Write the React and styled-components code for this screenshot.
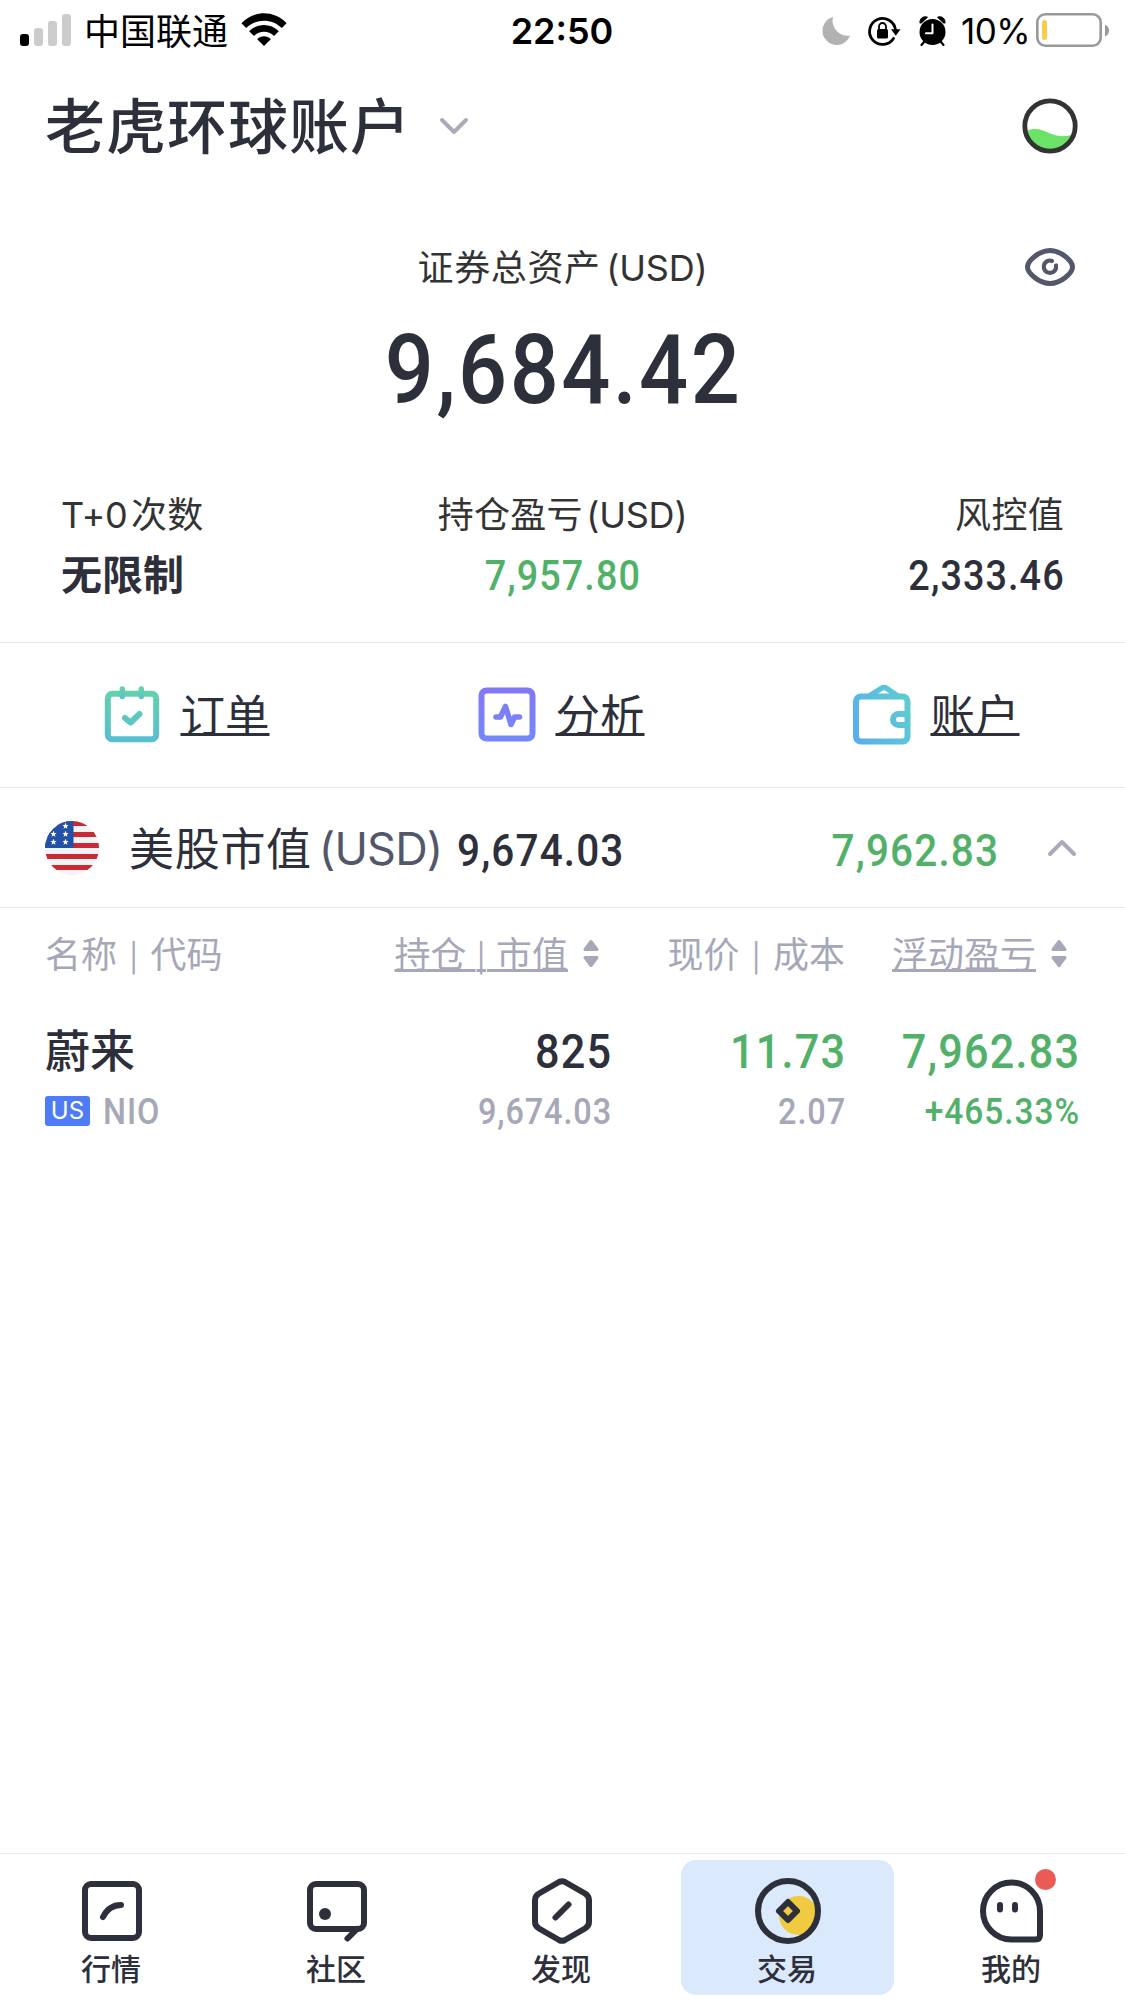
import styled, { createGlobalStyle } from "styled-components"

const positions = [
  {
    name: "蔚来",
    market: "US",
    code: "NIO",
    amount: "825",
    value: "9,674.03",
    price: "11.73",
    cost: "2.07",
    profit: "7,962.83",
    percent: "+465.33%",
  },
]

const tabs = [
  { label: "行情", icon: <QuotesIcon /> },
  { label: "社区", icon: <CommunityIcon /> },
  { label: "发现", icon: <DiscoverIcon /> },
  { label: "交易", icon: <TradeIcon />, active: true },
  { label: "我的", icon: <MineIcon />, unread: true },
]

export default function App() {
  return (
    <Page>
      <GlobalStyle />

      <StatusBar>
        <StatusSide>
          <SignalIcon />
          <Carrier>中国联通</Carrier>
          <WifiIcon />
        </StatusSide>
        <Clock>22:50</Clock>
        <StatusSide $end>
          <MoonIcon />
          <LockIcon />
          <AlarmIcon />
          <Percent>10%</Percent>
          <BatteryIcon />
        </StatusSide>
      </StatusBar>

      <AccountBar>
        <h1>老虎环球账户</h1>
        <Chevron />
        <LevelIcon />
      </AccountBar>

      <Summary>
        <AssetsLabel>
          <span>证券总资产 <Latin>(USD)</Latin></span>
          <EyeIcon />
        </AssetsLabel>
        <Total>
          <Num $size={96}>9,684.42</Num>
        </Total>
        <Stats>
          <Stat>
            <Label><Latin>T+0</Latin> 次数</Label>
            <StatValue>无限制</StatValue>
          </Stat>
          <Stat $align="center">
            <Label>持仓盈亏 <Latin>(USD)</Latin></Label>
            <StatValue><Num $size={42} $color={green}>7,957.80</Num></StatValue>
          </Stat>
          <Stat $align="right">
            <Label>风控值</Label>
            <StatValue><Num $size={42} $origin="right">2,333.46</Num></StatValue>
          </Stat>
        </Stats>
      </Summary>

      <Actions>
        <Action>
          <OrderIcon />
          <span>订单</span>
        </Action>
        <Action>
          <AnalysisIcon />
          <span>分析</span>
        </Action>
        <Action>
          <WalletIcon />
          <span>账户</span>
        </Action>
      </Actions>

      <MarketRow>
        <FlagIcon />
        <MarketName>美股市值</MarketName>
        <Currency>(USD)</Currency>
        <MarketValue>
          <Num $size={45} $origin="left">9,674.03</Num>
        </MarketValue>
        <MarketProfit>
          <Num $size={45} $color={green} $origin="right">7,962.83</Num>
        </MarketProfit>
        <Chevron $up />
      </MarketRow>

      <TableHead>
        <HeadCell>名称 <Pipe>|</Pipe> 代码</HeadCell>
        <HeadSort>
          <u>持仓 <Pipe>|</Pipe> 市值</u>
          <SortIcon />
        </HeadSort>
        <HeadCell $align="right">现价 <Pipe>|</Pipe> 成本</HeadCell>
        <HeadSort>
          <u>浮动盈亏</u>
          <SortIcon />
        </HeadSort>
      </TableHead>

      {positions.map((p) => (
        <Position key={p.code}>
          <Name>{p.name}</Name>
          <Num $size={48} $origin="right">{p.amount}</Num>
          <Num $size={48} $color={green} $origin="right">{p.price}</Num>
          <Num $size={48} $color={green} $origin="right">{p.profit}</Num>
          <Code>
            <Market>{p.market}</Market>
            <Num $size={36} $color={grey} $origin="left">{p.code}</Num>
          </Code>
          <Num $size={36} $color={grey} $origin="right">{p.value}</Num>
          <Num $size={36} $color={grey} $origin="right">{p.cost}</Num>
          <Num $size={36} $color={green} $origin="right" $scale={0.93}>{p.percent}</Num>
        </Position>
      ))}

      <TabBar>
        {tabs.map((tab) => (
          <Tab key={tab.label} $active={tab.active}>
            {tab.icon}
            <span>{tab.label}</span>
            {tab.unread && <Dot />}
          </Tab>
        ))}
      </TabBar>
    </Page>
  )
}

function SignalIcon() {
  return (
    <svg width="52" height="34" viewBox="0 0 52 34">
      <rect x="0" y="20" width="9" height="12" rx="3" fill="#000" />
      <rect x="14" y="14" width="9" height="18" rx="3" fill="#ccc" />
      <rect x="28" y="7" width="9" height="25" rx="3" fill="#ccc" />
      <rect x="42" y="0" width="9" height="32" rx="3" fill="#ccc" />
    </svg>
  )
}

function WifiIcon() {
  return (
    <svg width="46" height="34" viewBox="0 0 46 34">
      <path d="M0.4 9.2C13 -4 33 -4 45.6 9.2L40.8 14C31 4.2 15 4.2 5.2 14Z" />
      <path d="M8.2 17.2C16.5 8.8 29.5 8.8 37.8 17.2L33 22C27.3 16.4 18.7 16.4 13 22Z" />
      <path d="M16.2 25.2C20 21.4 26 21.4 29.8 25.2L23 32Z" />
    </svg>
  )
}

function MoonIcon() {
  return (
    <svg width="28" height="30" viewBox="0 0 28 30">
      <path d="M11 1A15 15 0 0 0 28 19.5A14.2 14.2 0 1 1 11 1Z" fill="#b2b2b2" />
    </svg>
  )
}

function LockIcon() {
  return (
    <svg width="33" height="30" viewBox="0 0 33 30">
      <path d="M25.5 22.5A13 13 0 1 1 27.5 14" fill="none" stroke="#000" strokeWidth="2.8" strokeLinecap="round" />
      <path d="M23 13.2H32.5L27.8 19.8Z" />
      <rect x="9" y="13" width="11" height="9.5" rx="1.5" />
      <path d="M11 13.5V10.5A3.5 3.5 0 0 1 18 10.5V13.5" fill="none" stroke="#000" strokeWidth="1.8" />
    </svg>
  )
}

function AlarmIcon() {
  return (
    <svg width="28" height="30" viewBox="0 0 28 30">
      <circle cx="13.5" cy="16" r="13" />
      <path d="M0.9 7.2C0 3 4.5 -1 8.7 1.2L2.6 7ZM26.1 7.2C27 3 22.5 -1 18.3 1.2L24.4 7Z" stroke="#000" strokeWidth="0.6" />
      <path d="M5 26L2.5 29M22 26L24.5 29" stroke="#000" strokeWidth="2.2" strokeLinecap="round" />
      <path d="M13.5 8.5V17.3H7" fill="none" stroke="#fff" strokeWidth="2" strokeLinecap="round" strokeLinejoin="round" />
    </svg>
  )
}

function BatteryIcon() {
  return (
    <svg width="74" height="34" viewBox="0 0 74 34">
      <rect x="1.3" y="0.3" width="63.4" height="31.4" rx="8" fill="none" stroke="#999" strokeWidth="2.6" />
      <rect x="6" y="6" width="5" height="20" rx="2.5" fill="#f7ce46" />
      <path d="M69 10.5Q73 12.5 73 16.5T69 22.5Z" fill="#999" />
    </svg>
  )
}

function LevelIcon() {
  return (
    <svg width="56" height="56" viewBox="0 0 56 56">
      <path d="M4 33C14 29 20 32 27 35S42 40 52 36A25 25 0 0 1 4 33Z" fill="#6ae368" />
      <circle cx="28" cy="28" r="25.2" fill="none" stroke="#333" strokeWidth="4.8" />
    </svg>
  )
}

function EyeIcon() {
  return (
    <svg width="50" height="40" viewBox="0 0 50 40" fill="none" stroke="#53576a" strokeWidth="5" strokeLinecap="round">
      <path d="M2.5 20C2.5 14 14 3.5 25 3.5S47.5 14 47.5 20S36 36.5 25 36.5S2.5 26 2.5 20Z" />
      <path d="M27 13.9A6.2 6.2 0 1 0 31 18.5" strokeWidth="4.2" />
    </svg>
  )
}

function OrderIcon() {
  return (
    <svg width="60" height="60" viewBox="0 0 60 60" fill="none" strokeLinecap="round" strokeLinejoin="round">
      <defs>
        <linearGradient id="order" gradientUnits="userSpaceOnUse" x1="0" y1="0" x2="0" y2="57">
          <stop offset="0" stopColor="#62d5a8" />
          <stop offset="1" stopColor="#58bdd0" />
        </linearGradient>
        <linearGradient id="ring" gradientUnits="userSpaceOnUse" x1="0" y1="3" x2="0" y2="15">
          <stop offset="0" stopColor="#62d5a8" />
          <stop offset="1" stopColor="#58bdd0" />
        </linearGradient>
      </defs>
      <rect x="2.8" y="8.8" width="48.4" height="45.4" rx="4.5" stroke="url(#order)" strokeWidth="6" />
      <path d="M17.3 4V11.5M36.3 4V11.5" stroke="url(#ring)" strokeWidth="5.4" />
      <path d="M20 33L25.5 37.5L34.5 29" stroke="url(#order)" strokeWidth="6" />
    </svg>
  )
}

function AnalysisIcon() {
  return (
    <svg width="60" height="60" viewBox="0 0 60 60" fill="none" strokeLinecap="round" strokeLinejoin="round">
      <defs>
        <linearGradient id="analysis" gradientUnits="userSpaceOnUse" x1="0" y1="3" x2="0" y2="57">
          <stop offset="0" stopColor="#8377f5" />
          <stop offset="1" stopColor="#7488fb" />
        </linearGradient>
      </defs>
      <g stroke="url(#analysis)">
        <rect x="1.5" y="5.5" width="51" height="48" rx="5" strokeWidth="6" />
        <path d="M16 32H20.5L25.5 21.5L31 39.5L34.5 32H39.500" strokeWidth="5.600" />
      </g>
    </svg>
  )
}

function WalletIcon() {
  return (
    <svg width="60" height="60" viewBox="0 0 60 60" fill="none" strokeLinecap="round" strokeLinejoin="round">
      <defs>
        <linearGradient id="wallet" gradientUnits="userSpaceOnUse" x1="-2" y1="45" x2="55" y2="20">
          <stop offset="0" stopColor="#58aeee" />
          <stop offset="1" stopColor="#5dccd0" />
        </linearGradient>
      </defs>
      <g stroke="url(#wallet)" strokeWidth="6">
        <rect x="1" y="11.5" width="51.5" height="45" rx="5" />
        <path d="M15 10.5L26.5 3.3Q29 1.5 31.5 3.3L42 10.5" strokeWidth="5.4" />
        <path d="M52 29H43.5A5.5 5.5 0 0 0 43.5 40H52" />
      </g>
    </svg>
  )
}

function FlagIcon() {
  return (
    <svg width="54" height="54" viewBox="0 0 54 54">
      <defs>
        <clipPath id="flag"><circle cx="27" cy="27" r="27" /></clipPath>
        <path id="star" d="M0 -3.2L0.9 -1H3.1L1.3 0.5L2 2.8L0 1.4L-2 2.8L-1.3 0.5L-3.1 -1H-0.9Z" fill="#fff" />
      </defs>
      <g clipPath="url(#flag)">
        <rect width="54" height="54" fill="#f3f3f5" />
        {[0, 11, 22, 33, 44].map((y) => (
          <rect key={y} y={y} width="54" height="5" fill="#c92a35" />
        ))}
        <rect width="28.5" height="27" fill="#2350a8" />
        <use href="#star" x="20.5" y="5" />
        <use href="#star" x="8.5" y="13" />
        <use href="#star" x="20.5" y="13" />
        <use href="#star" x="8.5" y="21" />
        <use href="#star" x="20.5" y="21" />
      </g>
    </svg>
  )
}

function Chevron({ $up }) {
  return (
    <svg width="30" height="20" viewBox="0 0 30 20" fill="none" stroke="#a9aaba" strokeWidth="4" strokeLinecap="round" strokeLinejoin="round">
      <path d={$up ? "M3 16L15 4L27 16" : "M3 4L15 16L27 4"} />
    </svg>
  )
}

function SortIcon() {
  return (
    <svg width="16" height="30" viewBox="0 0 16 30" fill="#a6a7b7" stroke="#a6a7b7" strokeWidth="3" strokeLinejoin="round">
      <path d="M8 2.5L14 10.5H2Z" />
      <path d="M8 26.5L14 18.5H2Z" />
    </svg>
  )
}

function QuotesIcon() {
  return (
    <svg width="66" height="66" viewBox="0 0 66 66" fill="none" stroke="#2d2f3b" strokeWidth="6" strokeLinecap="round">
      <rect x="6" y="6" width="54" height="54" rx="6" />
      <path d="M24 39Q30 27 42 27" />
    </svg>
  )
}

function CommunityIcon() {
  return (
    <svg width="66" height="66" viewBox="0 0 66 66" fill="none" stroke="#2d2f3b" strokeWidth="6" strokeLinecap="round">
      <rect x="6" y="6" width="54" height="45" rx="6" />
      <circle cx="21" cy="36" r="6" fill="#2d2f3b" stroke="none" />
      <path d="M53 51L43.5 60.5" />
    </svg>
  )
}

function DiscoverIcon() {
  return (
    <svg width="66" height="66" viewBox="0 0 66 66" fill="none" stroke="#2d2f3b" strokeWidth="6" strokeLinecap="round">
      <path d="M30 4Q33 2.4 36 4L56 15.5Q60 18 60 22V44Q60 48 56 50.5L36 62Q33 63.6 30 62L10 50.5Q6 48 6 44V22Q6 18 10 15.5Z" />
      <path d="M26.5 39.5L39.5 26.5" />
    </svg>
  )
}

function TradeIcon() {
  return (
    <svg width="66" height="66" viewBox="0 0 66 66" fill="none" stroke="#2d2f3b" strokeWidth="6">
      <circle cx="43.5" cy="37.5" r="19.5" fill="#f0ca41" stroke="none" />
      <circle cx="33" cy="33" r="30" />
      <path d="M33 24L42 33L33 42L24 33Z" strokeLinejoin="round" />
    </svg>
  )
}

function MineIcon() {
  return (
    <svg width="66" height="66" viewBox="0 0 66 66" fill="none" stroke="#2d2f3b" strokeWidth="6" strokeLinecap="round">
      <path d="M32.5 4.5A28.5 28.5 0 0 1 61 33V57Q61 61.5 56.5 61.5H32.5A28.5 28.5 0 0 1 32.5 4.5Z" />
      <path d="M21 27V31.5M36 27V31.5" />
    </svg>
  )
}

const ink = "#2d2f3b"
const green = "#51b169"
const grey = "#a6a7b7"

const GlobalStyle = createGlobalStyle`
  body {
    margin: 0;
    background-color: #fff;
    font-family: "Noto Sans CJK SC", sans-serif;
    color: ${ink};
  }
  svg {
    display: block;
    flex-shrink: 0;
    overflow: visible;
  }
`
const Page = styled.div`
  width: 1125px;
  height: 2001px;
  display: flex;
  flex-direction: column;
  overflow: hidden;
  white-space: nowrap;
`
const StatusBar = styled.header`
  height: 62px;
  padding: 0 15px 0 20px;
  display: grid;
  grid-template-columns: 1fr auto 1fr;
  align-items: center;
  color: #000;
`
const StatusSide = styled.div`
  display: flex;
  align-items: center;
  justify-content: ${(props) => (props.$end ? "flex-end" : "flex-start")};
  gap: ${(props) => (props.$end ? "18px" : "13px")};
`
const Carrier = styled.span`
  margin-left: -1px;
  padding-bottom: 4px;
  font-size: 36px;
  line-height: 46px;
`
const Clock = styled.strong`
  padding-right: 6px;
  font-family: Inter, sans-serif;
  font-size: 36px;
  font-weight: 600;
`
const Percent = styled.span`
  margin: 0 -12px 0 -4px;
  font-family: Inter, sans-serif;
  font-size: 35px;
  letter-spacing: -0.6px;
`
const AccountBar = styled.section`
  height: 127px;
  padding: 0 47px 0 45px;
  display: flex;
  align-items: center;
  h1 {
    margin: 0 28px 0 0;
    padding-bottom: 5px;
    font-size: 60px;
    font-weight: 500;
    line-height: 80px;
    letter-spacing: 1px;
  }
  svg:last-child {
    margin-left: auto;
  }
`
const Summary = styled.section`
  height: 454px;
  box-sizing: border-box;
  padding-top: 46px;
  border-bottom: 1px solid #e6e7ec;
`
const Latin = styled.span`
  font-family: Inter, sans-serif;
  letter-spacing: -0.2px;
`
const AssetsLabel = styled.div`
  height: 60px;
  padding: 0 50px;
  display: grid;
  grid-template-columns: 50px 1fr 50px;
  align-items: center;
  font-size: 36px;
  line-height: 60px;
  letter-spacing: 0.6px;
  word-spacing: -3px;
  color: #333;
  span {
    text-align: center;
    grid-column: 2;
  }
`
const Num = styled.span`
  display: inline-block;
  font-family: Roboto, sans-serif;
  font-size: ${(props) => props.$size}px;
  font-weight: 500;
  letter-spacing: 0.028em;
  margin-right: -0.028em;
  color: ${(props) => props.$color || ink};
  transform: scaleX(${(props) => props.$scale || 0.9});
  transform-origin: ${(props) => props.$origin || "center"};
`
const Total = styled.div`
  height: 110px;
  margin-top: 20px;
  line-height: 110px;
  text-align: center;
`
const Stats = styled.div`
  margin-top: 63px;
  padding: 0 61px;
  display: grid;
  grid-template-columns: repeat(3, 1fr);
`
const Stat = styled.div`
  text-align: ${(props) => props.$align || "left"};
`
const Label = styled.div`
  height: 48px;
  font-size: 36px;
  line-height: 48px;
  letter-spacing: 0.3px;
  word-spacing: -5px;
  color: #333;
`
const StatValue = styled.div`
  margin-top: 8px;
  height: 56px;
  font-size: 41px;
  line-height: 56px;
  font-weight: 700;
`
const Actions = styled.nav`
  height: 145px;
  box-sizing: border-box;
  display: grid;
  grid-template-columns: repeat(3, 1fr);
  border-bottom: 1px solid #e9e9ec;
`
const Action = styled.a`
  display: flex;
  align-items: center;
  justify-content: center;
  gap: 15px;
  font-size: 44.5px;
  line-height: 56px;
  span {
    padding-bottom: 4px;
    text-decoration: underline;
    text-decoration-thickness: 3px;
    text-underline-offset: 1px;
    text-decoration-skip-ink: none;
  }
`
const MarketRow = styled.section`
  height: 120px;
  box-sizing: border-box;
  padding: 0 48px 0 45px;
  display: flex;
  align-items: center;
  border-bottom: 1px solid #e9e9ec;
`
const MarketName = styled.span`
  margin-left: 30px;
  padding-bottom: 2px;
  font-size: 45px;
  line-height: 60px;
  letter-spacing: 0.7px;
`
const Currency = styled.span`
  margin: 0 15px 0 7px;
  padding-top: 2px;
  font-family: Inter, sans-serif;
  font-size: 45px;
  letter-spacing: -0.8px;
  color: #53576a;
`
const MarketValue = styled.div`
  padding-top: 5px;
`
const MarketProfit = styled.div`
  margin: 0 49px 0 auto;
  padding-top: 5px;
`
const TableHead = styled.div`
  height: 90px;
  box-sizing: border-box;
  padding: 0 46px 2px 45px;
  display: grid;
  grid-template-columns: 275px 291px 234px 234px;
  align-items: center;
  font-size: 36px;
  line-height: 50px;
  color: ${grey};
  u {
    height: 50px;
    text-decoration-thickness: 3px;
    text-underline-offset: 1px;
    text-decoration-skip-ink: none;
  }
`
const Pipe = styled.span`
  margin: 0 1px;
  font-family: Inter, sans-serif;
  font-size: 28px;
`
const HeadCell = styled.div`
  height: 50px;
  text-align: ${(props) => props.$align || "left"};
  word-spacing: 3px;
`
const HeadSort = styled.div`
  display: flex;
  align-items: center;
  justify-content: flex-end;
  gap: 15px;
  padding-right: 12px;
  word-spacing: 1px;
  svg {
    margin-top: 3px;
  }
`
const Position = styled.div`
  padding: 20px 46px 0 45px;
  display: grid;
  grid-template-columns: 275px 291px 234px 234px;
  grid-template-rows: 66px 56px;
  align-items: center;
  text-align: right;
`
const Name = styled.div`
  padding-bottom: 5px;
  text-align: left;
  font-size: 45px;
  line-height: 60px;
  font-weight: 500;
`
const Code = styled.div`
  display: flex;
  align-items: center;
  gap: 13px;
`
const Market = styled.span`
  width: 45px;
  height: 30px;
  margin-top: -2px;
  border-radius: 3px;
  background-color: #4e7cf6;
  color: #fff;
  font-family: Inter, sans-serif;
  font-size: 24px;
  line-height: 30px;
  text-align: center;
`
const TabBar = styled.nav`
  margin-top: auto;
  height: 148px;
  box-sizing: border-box;
  padding: 6px 0;
  display: grid;
  grid-template-columns: repeat(5, 1fr);
  border-top: 1px solid #e9e9ec;
`
const Tab = styled.a`
  position: relative;
  margin: 0 6px;
  padding: 18px ${(props) => (props.$active ? 0 : 2)}px 0 0;
  display: flex;
  flex-direction: column;
  align-items: center;
  border-radius: 15px;
  background-color: ${(props) => (props.$active ? "#dbe9fc" : "transparent")};
  span {
    margin: 2px 1px 0 0;
    font-size: 30px;
    line-height: 42px;
    font-weight: 500;
  }
`
const Dot = styled.i`
  position: absolute;
  top: 9px;
  right: 63px;
  width: 21px;
  height: 21px;
  border-radius: 50%;
  background-color: #ea5b56;
`
